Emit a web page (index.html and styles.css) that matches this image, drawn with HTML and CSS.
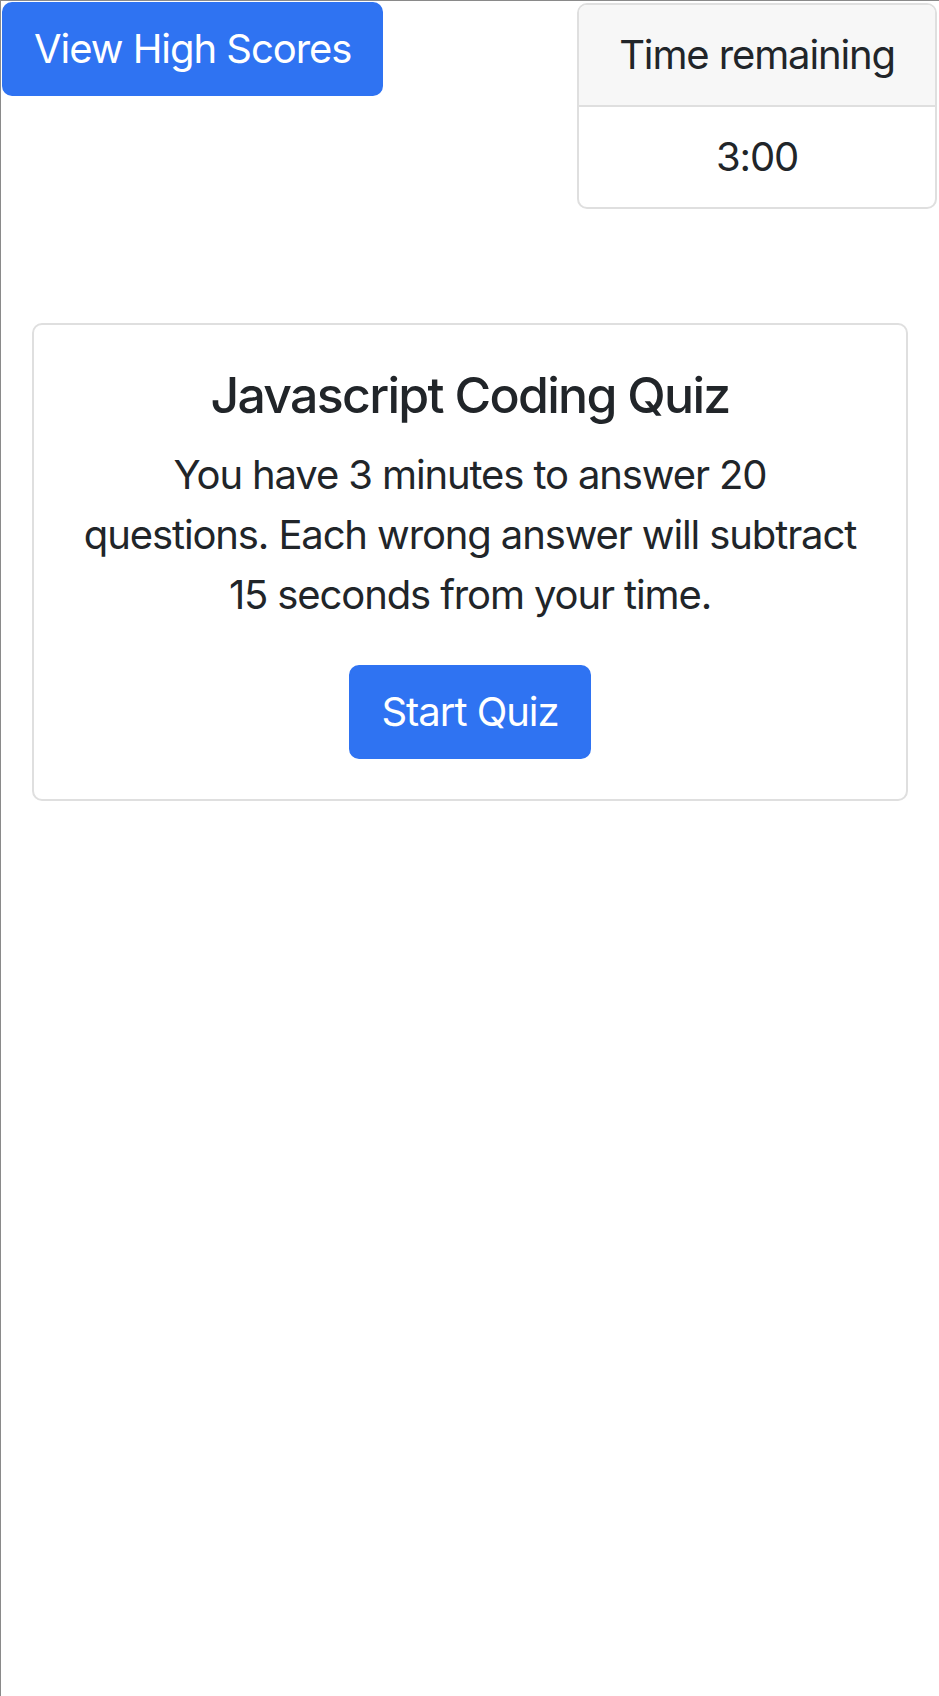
FILE: index.html
```html
<!DOCTYPE html>
<html lang="en">
<head>
<meta charset="utf-8">
<title>Javascript Coding Quiz</title>
<link rel="stylesheet" href="styles.css">
</head>
<body>
  <div class="page">
    <header class="topbar">
      <button class="btn btn-primary">View High Scores</button>
      <div class="card timer">
        <div class="card-header">Time remaining</div>
        <div class="card-body timer-body">3:00</div>
      </div>
    </header>
    <main class="main">
      <section class="card quiz">
        <div class="card-body quiz-body">
          <h5 class="card-title">Javascript Coding Quiz</h5>
          <p class="card-text">You have 3 minutes to answer 20 questions. Each wrong answer will subtract 15 seconds from your time.</p>
          <button class="btn btn-primary">Start Quiz</button>
        </div>
      </section>
    </main>
  </div>
</body>
</html>
```

FILE: styles.css
```css
* {
  box-sizing: border-box;
}

html, body {
  margin: 0;
  padding: 0;
  background: #ffffff;
}

body {
  font-family: Inter, "Noto Sans", "Liberation Sans", sans-serif;
  font-size: 40px;
  line-height: 1.5;
  letter-spacing: -0.028em;
  color: #212529;
  border-top: 1px solid #8a8a8a;
  border-left: 1px solid #8a8a8a;
  min-height: 1696px;
}

.page {
  padding: 1px 2px 0 1px;
}

.topbar {
  display: flex;
  justify-content: space-between;
  align-items: flex-start;
}

.btn {
  font-family: inherit;
  font-size: 40px;
  line-height: 1.5;
  letter-spacing: -0.026em;
  font-weight: 400;
  padding: 15px 30px;
  border-radius: 10px;
  border: 2px solid transparent;
  cursor: pointer;
}

.btn-primary {
  background: #2f73f2;
  border-color: #2f73f2;
  color: #ffffff;
}

.card {
  border: 2px solid #dfdfdf;
  border-radius: 10px;
  background: #ffffff;
  overflow: hidden;
}

.timer {
  margin-top: 1px;
  text-align: center;
}

.card-header {
  background: #f7f7f7;
  border-bottom: 2px solid #dfdfdf;
  padding: 20px 40px;
}

.timer-body {
  padding: 20px 40px;
}

.main {
  padding: 114px 29px 0 30px;
}

.quiz-body {
  padding: 40px;
  text-align: center;
}

.card-title {
  margin: 0 0 20px;
  font-size: 50px;
  font-weight: 500;
  line-height: 1.2;
  letter-spacing: -0.034em;
}

.card-text {
  max-width: 784px;
  margin: 0 auto 40px;
}
```
